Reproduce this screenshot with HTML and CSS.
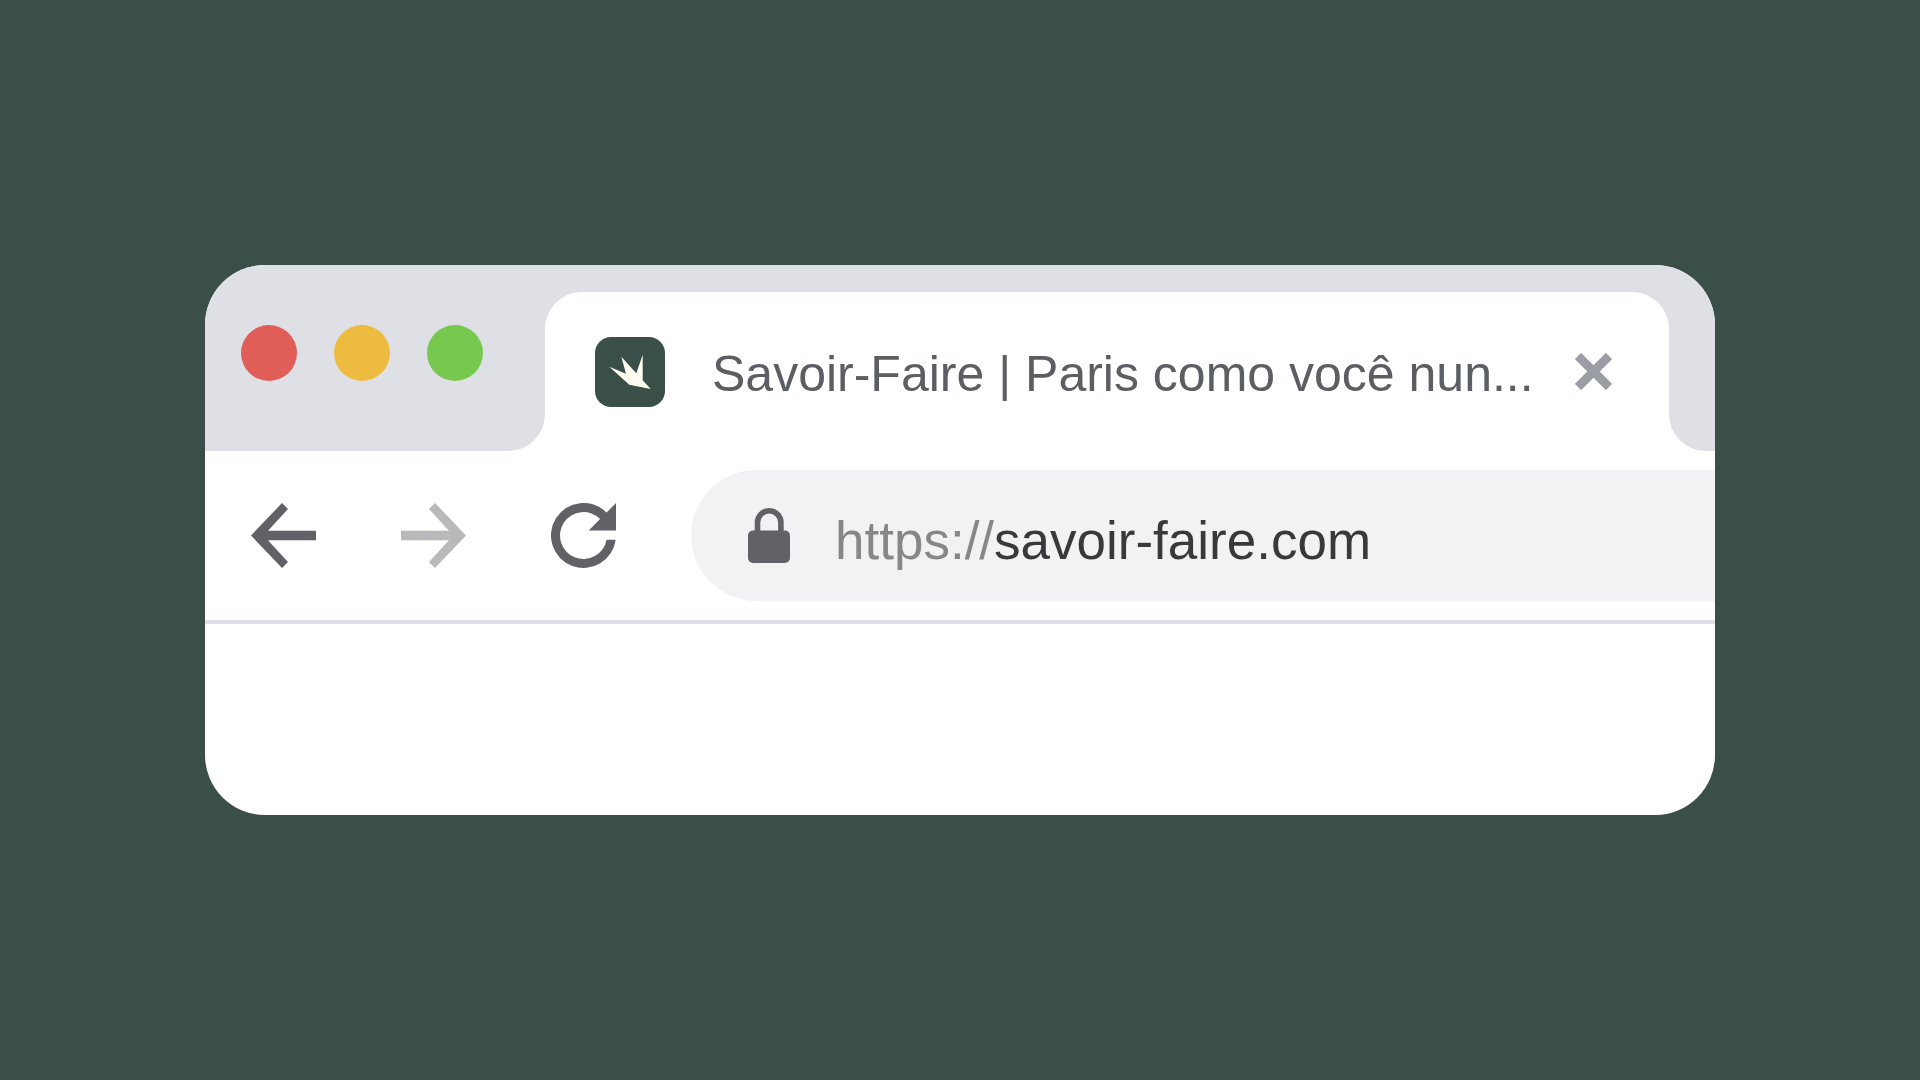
FILE: index.html
```html
<!DOCTYPE html>
<html lang="pt-BR">

<head>
    <meta charset="UTF-8">
    <meta name="viewport" content="width=device-width, initial-scale=1.0">
    <title>Savoir-Faire | Paris como você nunca viu</title>
    <link rel="stylesheet" href="styles.css">
</head>

<body>
    <main class="browser">
        <div class="tab-strip">
            <div class="window-controls">
                <button class="dot dot-close" aria-label="Fechar janela"></button>
                <button class="dot dot-minimize" aria-label="Minimizar"></button>
                <button class="dot dot-zoom" aria-label="Maximizar"></button>
            </div>
            <div class="tab-holder">
                <div class="tab">
                    <svg class="favicon" viewBox="0 0 70 70" aria-hidden="true">
                        <rect width="70" height="70" rx="16" fill="#3a4f47" />
                        <path d="M14.3 29.7L31 36.7L26.3 19.7L41.3 36.3L47.7 17.7V43.3L55.7 52L34.3 47.7Z" fill="#fffdf0" />
                    </svg>
                    <span class="tab-title">Savoir-Faire | Paris como você nun...</span>
                    <button class="tab-close" aria-label="Fechar aba">
                        <svg viewBox="0 0 37 37">
                            <path d="M3 3L34 34M34 3L3 34" stroke="currentColor" stroke-width="8.8" />
                        </svg>
                    </button>
                </div>
            </div>
            <div class="strip-end"></div>
        </div>

        <div class="toolbar">
            <nav class="nav-buttons">
                <button class="nav-button" aria-label="Voltar">
                    <svg viewBox="0 0 65 65">
                        <path d="M0 32.5L31 0L37 6L17 27.7H65V37.3H17L37 59L31 65Z" />
                    </svg>
                </button>
                <button class="nav-button forward" aria-label="Avançar">
                    <svg viewBox="0 0 65 65">
                        <path d="M65 32.5L34 0L28 6L48 27.7H0V37.3H48L28 59L34 65Z" />
                    </svg>
                </button>
                <button class="nav-button" aria-label="Recarregar">
                    <svg viewBox="0 0 65 65">
                        <path d="M65 0V27.5H37.7L49.1 15.9A23.5 23.5 0 1 0 55.6 36.8H64.7A32.5 32.5 0 1 1 55.5 9.5Z" />
                    </svg>
                </button>
            </nav>
            <div class="address-bar">
                <svg class="lock" viewBox="0 0 42 55" aria-hidden="true">
                    <rect y="22.5" width="42" height="32.5" rx="5" fill="currentColor" />
                    <path d="M9.5 25V14.5A11.7 11.7 0 0 1 32.9 14.5V25" fill="none" stroke="currentColor" stroke-width="5.6" />
                </svg>
                <label class="protocol" for="url">https://</label>
                <input class="url" id="url" type="text" value="savoir-faire.com" spellcheck="false">
            </div>
        </div>

        <div class="page"></div>
    </main>
</body>

</html>
```

FILE: styles.css
```css
* {
    box-sizing: border-box;
}

body {
    margin: 0;
    min-height: 100vh;
    padding: 40px 205px;
    display: flex;
    align-items: center;
    background-color: #3a4f47;
    font-family: 'Liberation Sans', Arial, sans-serif;
    font-size: 50px;
    line-height: 60px;
}

button {
    padding: 0;
    border: none;
    background: none;
    cursor: pointer;
}

svg {
    display: block;
}

.browser {
    flex: 1;
    min-width: 0;
    background-color: #fff;
    border-radius: 60px;
    overflow: hidden;
}

/* Tabs */
.tab-strip {
    display: flex;
    height: 186px;
}

.window-controls {
    display: flex;
    gap: 37px;
    padding: 60px 62px 0 36px;
    background-color: #dee0e6;
    border-bottom-right-radius: 37px;
}

.dot {
    width: 56px;
    height: 56px;
    border-radius: 50%;
}

.dot-close {
    background-color: #e05e57;
}

.dot-minimize {
    background-color: #edbb40;
}

.dot-zoom {
    background-color: #76c84f;
}

.tab-holder {
    flex: 1;
    min-width: 0;
    padding-top: 27px;
    background-color: #dee0e6;
}

.tab {
    display: flex;
    align-items: center;
    height: 100%;
    padding: 0 57px 0 50px;
    background-color: #fff;
    border-radius: 37px 37px 0 0;
}

.favicon {
    flex: none;
    width: 70px;
    height: 70px;
    margin-right: 47px;
}

.tab-title {
    flex: 1;
    min-width: 0;
    padding-top: 4px;
    overflow: hidden;
    white-space: nowrap;
    color: #5b5e63;
}

.tab-close {
    flex: none;
    width: 37px;
    height: 37px;
    color: #9a9da3;
}

.strip-end {
    width: 46px;
    background-color: #dee0e6;
    border-bottom-left-radius: 37px;
}

/* Toolbar */
.toolbar {
    display: flex;
    align-items: center;
    padding: 19px 0 19px 46px;
    border-bottom: 4px solid #dee0e6;
}

.nav-buttons {
    display: flex;
    gap: 85px;
    margin-right: 75px;
}

.nav-button {
    width: 65px;
    height: 65px;
    color: #606267;
}

.nav-button svg {
    fill: currentColor;
}

.forward {
    color: #b8b9bb;
}

.address-bar {
    flex: 1;
    min-width: 0;
    display: flex;
    align-items: center;
    height: 131px;
    padding-left: 57px;
    background-color: #f1f2f4;
    border-radius: 66px 0 0 66px;
    font-size: 53px;
}

.lock {
    flex: none;
    width: 42px;
    height: 55px;
    margin-right: 45px;
    color: #606267;
}

.protocol {
    padding-top: 10px;
    color: #85878a;
}

.url {
    flex: 1;
    min-width: 0;
    padding: 10px 0 0;
    border: none;
    outline: none;
    background: none;
    color: #37393c;
    font: inherit;
}

.page {
    min-height: 191px;
}
```
